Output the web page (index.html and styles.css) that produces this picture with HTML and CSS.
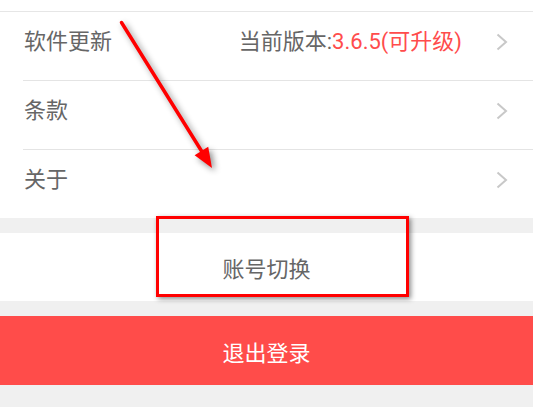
FILE: index.html
```html
<!DOCTYPE html>
<html lang="zh-CN">
<head>
<meta charset="utf-8">
<title>设置</title>
<link rel="stylesheet" href="styles.css">
</head>
<body>
<div class="page">
  <div class="top-gap"></div>
  <div class="list">
    <div class="row">
      <span class="label">软件更新</span>
      <span class="value">当前版本:<span class="hl">3.6.5(可升级)</span></span>
      <svg class="chev" width="12" height="18" viewBox="0 0 12 18"><path d="M1.5 1.5 L10 9 L1.5 16.5" fill="none" stroke="#c8c8c8" stroke-width="2"/></svg>
    </div>
    <div class="row">
      <span class="label">条款</span>
      <svg class="chev" width="12" height="18" viewBox="0 0 12 18"><path d="M1.5 1.5 L10 9 L1.5 16.5" fill="none" stroke="#c8c8c8" stroke-width="2"/></svg>
    </div>
    <div class="row last">
      <span class="label">关于</span>
      <svg class="chev" width="12" height="18" viewBox="0 0 12 18"><path d="M1.5 1.5 L10 9 L1.5 16.5" fill="none" stroke="#c8c8c8" stroke-width="2"/></svg>
    </div>
  </div>
  <div class="gap"></div>
  <div class="switch">账号切换</div>
  <div class="gap"></div>
  <div class="logout">退出登录</div>
  <div class="bottom"></div>
</div>
<div class="mark-box"></div>
<svg class="mark-arrow" width="537" height="413" viewBox="0 0 537 413">
  <line x1="121.5" y1="22.5" x2="204" y2="155" stroke="#ff0000" stroke-width="3.5" stroke-linecap="round"/>
  <polygon points="212,168 194.6,155.2 208.2,146.8" fill="#ff0000"/>
</svg>
</body>
</html>
```
FILE: styles.css
```css
html, body {
  margin: 0;
  padding: 0;
  background: #ffffff;
}
body {
  width: 537px;
  height: 413px;
  overflow: hidden;
  position: relative;
  font-family: Roboto, "Noto Sans CJK SC", sans-serif;
}
.page {
  width: 533px;
  display: flex;
  flex-direction: column;
}
.top-gap {
  height: 11px;
  background: #ffffff;
}
.list {
  border-top: 1px solid #e6e6e6;
  background: #ffffff;
}
.row {
  height: 68px;
  margin-left: 23px;
  padding-left: 1px;
  padding-right: 25px;
  display: flex;
  align-items: center;
  border-bottom: 1px solid #e4e4e4;
  padding-bottom: 0;
  box-sizing: content-box;
  font-size: 22px;
  color: #666666;
}
.row.last {
  border-bottom: none;
  height: 68px;
}
.label {
  flex: 1;
  position: relative;
  top: -4px;
  line-height: 1;
}
.value {
  position: relative;
  top: -4px;
  line-height: 1;
  margin-right: 34px;
}
.hl {
  color: #ff4c4c;
}
.chev {
  display: block;
  position: relative;
  top: -4px;
}
.gap {
  height: 15px;
  background: #f0f0f0;
}
.switch {
  height: 68px;
  background: #ffffff;
  display: flex;
  align-items: center;
  justify-content: center;
  font-size: 22px;
  color: #666666;
}
.logout {
  height: 69px;
  background: #ff4c4a;
  display: flex;
  align-items: center;
  justify-content: center;
  font-size: 22px;
  color: #ffffff;
}
.bottom {
  height: 22px;
  background: #f0f0f0;
}
.mark-box {
  position: absolute;
  left: 156px;
  top: 216px;
  width: 247px;
  height: 75px;
  border: 3px solid #ff0000;
  box-shadow: 2px 2px 5px rgba(0, 0, 0, 0.45);
}
.mark-arrow {
  position: absolute;
  left: 0;
  top: 0;
  filter: drop-shadow(3px 3px 3px rgba(0, 0, 0, 0.45));
}
```
